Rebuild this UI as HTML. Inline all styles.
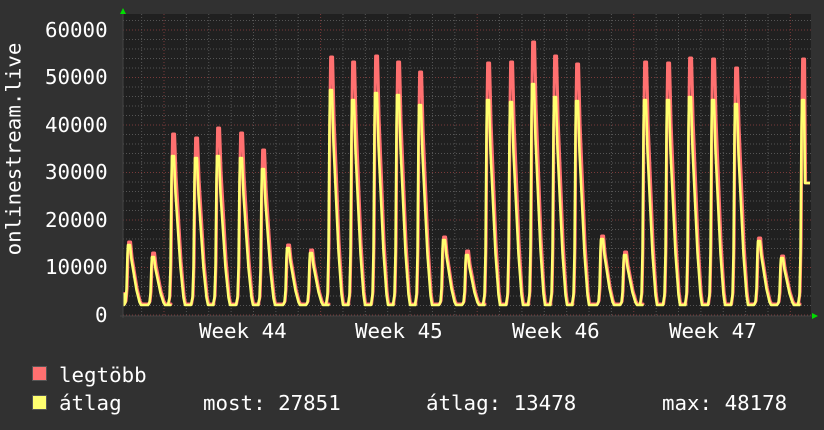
<!DOCTYPE html>
<html><head><meta charset="utf-8"><style>
html,body{margin:0;padding:0;background:#313131;}
body{width:824px;height:430px;position:relative;overflow:hidden;font-family:"DejaVu Sans Mono","Liberation Mono",monospace;color:#fff;}
.t{position:absolute;font-size:20.8px;white-space:pre;line-height:1;}
</style></head><body>
<svg id="g" width="824" height="430" style="position:absolute;left:0;top:0"></svg>
<div class="t" style="left:45px;top:20px">60000</div>
<div class="t" style="left:45px;top:67px">50000</div>
<div class="t" style="left:45px;top:115px">40000</div>
<div class="t" style="left:45px;top:162px">30000</div>
<div class="t" style="left:45px;top:210px">20000</div>
<div class="t" style="left:45px;top:257px">10000</div>
<div class="t" style="left:95px;top:305px">0</div>
<div class="t" style="left:199px;top:321px">Week 44</div>
<div class="t" style="left:355px;top:321px">Week 45</div>
<div class="t" style="left:512px;top:321px">Week 46</div>
<div class="t" style="left:669px;top:321px">Week 47</div>
<div class="t" style="left:-76px;top:155px;transform:rotate(-90deg);width:180px;text-align:center">onlinestream.live</div>
<div style="position:absolute;left:32px;top:366px;width:13px;height:13px;background:#ff7070;border:1px solid #555"></div>
<div style="position:absolute;left:32px;top:395px;width:13px;height:13px;background:#ffff70;border:1px solid #555"></div>
<div class="t" style="left:59px;top:365px">legtöbb</div>
<div class="t" style="left:59px;top:393px">átlag</div>
<div class="t" style="left:203px;top:393px">most: 27851</div>
<div class="t" style="left:426px;top:393px">átlag: 13478</div>
<div class="t" style="left:662px;top:393px">max: 48178</div>
<script>
var s='';
s+='<rect x="123" y="14" width="688" height="302" fill="#202020"/>';
for(var v=0;v<=62000;v+=2000){var y=315-v*0.00475;if(y<14)break;var maj=v%10000==0;
s+='<line x1="123" x2="811" y1="'+y+'" y2="'+y+'" stroke="'+(maj?'#7a3a3a':'#555')+'" stroke-dasharray="1,2"/>';}
var d0=164-7*22.37;
for(var i=0;i<40;i++){var x=d0+i*22.37;if(x<123)continue;if(x>811)break;var maj=Math.abs((i-7)%7)==0;
s+='<line y1="14" y2="315" x1="'+x+'" x2="'+x+'" stroke="'+(maj?'#7a3a3a':'#555')+'" stroke-dasharray="1,2"/>';}
var pk=[[129,242,245],[153,253,257],[173,134,156],[196,138,158],[218,128,156],[241,133,158],[263,150,169],[288,245,248],[311,250,253],[331,57,90],[353,62,100],[376,56,93],[398,62,95],[420,72,105],[444,237,240],[467,251,255],[488,63,100],[511,62,102],[533,42,84],[555,56,97],[577,64,101],[602,236,239],[625,252,255],[645,62,100],[668,63,100],[690,58,97],[713,59,100],[736,68,104],[759,238,241],[782,256,258],[803,59,100]];
var sh=[[0,0],[1.5,0.05],[2.5,0.25],[3.5,0.85],[4,1],[6,1],[7.5,0.75],[9.5,0.55],[12.5,0.25],[15.5,0.05],[17,0],[22.4,0]];
function path(k,tr,off){var p='M124,'+(tr-12);
for(var j=0;j<pk.length;j++){var st=pk[j][0]-5+off,py=pk[j][k];
for(var m=0;m<sh.length;m++){var x=st+sh[m][0];if(x<124)continue;if(x>810)break;
if(j==pk.length-1&&sh[m][0]>6){x=st+7;p+=' L'+x+',183 L810,183';return p;}
p+=' L'+x.toFixed(1)+','+(tr-(tr-py)*sh[m][1]).toFixed(1);}}
return p;}
s+='<path d="'+path(1,304,0.6)+'" fill="none" stroke="#ff7070" stroke-width="3" stroke-linejoin="round"/>';
s+='<path d="'+path(2,305,0)+'" fill="none" stroke="#ffff70" stroke-width="2.6" stroke-linejoin="round"/>';
s+='<line x1="123" x2="123" y1="10" y2="318" stroke="#444"/><line x1="120" x2="815" y1="316" y2="316" stroke="#444"/>';
s+='<polygon points="123,8 120,14 126,14" fill="#00dd00"/><polygon points="818,316 812,313 812,319" fill="#00dd00"/>';
document.getElementById('g').innerHTML=s;
</script>
</body></html>
